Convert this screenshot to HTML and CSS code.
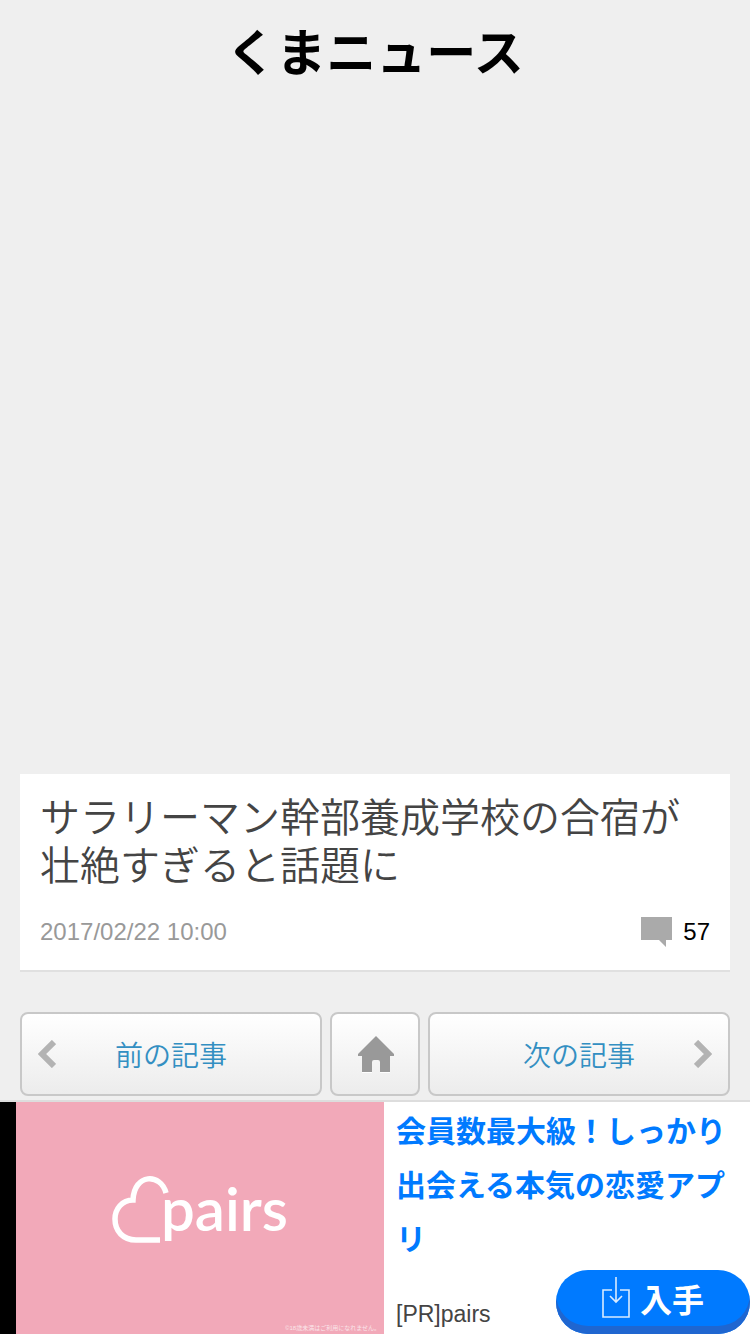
FILE: index.html
```html
<!DOCTYPE html>
<html lang="ja">
<head>
    <meta charset="UTF-8">
    <meta name="viewport" content="width=device-width">
    <title>くまニュース</title>
    <link rel="stylesheet" href="styles.css">
</head>
<body>
    <header class="header">
        <h1>くまニュース</h1>
    </header>

    <main class="main">
        <article class="article">
            <h2>サラリーマン幹部養成学校の合宿が壮絶すぎると話題に</h2>
            <div class="meta">
                <time datetime="2017-02-22T10:00">2017/02/22 10:00</time>
                <span class="comments">
                    <svg width="31" height="30" viewBox="0 0 31 30" aria-hidden="true">
                        <path d="M0 0H31V23H25V30L18 23H0Z" fill="#aaa"/>
                    </svg>
                    57
                </span>
            </div>
        </article>

        <nav class="pager">
            <a class="pager-btn prev" href="#prev">
                <svg width="18" height="28" viewBox="0 0 18 28" aria-hidden="true">
                    <path d="M16 2L4 14L16 26" fill="none" stroke="#b3b3b3" stroke-width="6"/>
                </svg>
                <span>前の記事</span>
            </a>
            <a class="pager-btn home" href="#home" aria-label="ホーム">
                <svg width="38" height="38" viewBox="-2 -1 38 38" aria-hidden="true">
                    <path d="M4 35H14V37H4ZM22 35H32V37H22Z" fill="#fff"/>
                    <path d="M18 0L36 18V20H32V36H22V26Q22 24 20 24H16Q14 24 14 26V36H4V20H0V18Z" fill="#999"/>
                </svg>
            </a>
            <a class="pager-btn next" href="#next">
                <span>次の記事</span>
                <svg width="18" height="28" viewBox="0 0 18 28" aria-hidden="true">
                    <path d="M2 2L14 14L2 26" fill="none" stroke="#b3b3b3" stroke-width="6"/>
                </svg>
            </a>
        </nav>
    </main>

    <aside class="ad">
        <div class="ad-image">
            <svg class="logo" width="200" height="90" viewBox="0 0 200 90" role="img" aria-label="pairs">
                <path d="M66 28C61 8 34 8 33 35C22 35 15 44 15 54C15 66 23 75 36 75H60" fill="none" stroke="#fff" stroke-width="5.5"/>
                <text x="61" y="66">pairs</text>
            </svg>
            <small>©18歳未満はご利用になれません。</small>
        </div>
        <div class="ad-body">
            <a class="ad-title" href="#pairs">会員数最大級！しっかり出会える本気の恋愛アプリ</a>
            <div class="ad-foot">
                <span class="ad-pr">[PR]pairs</span>
                <button class="get-btn" type="button">
                    <svg width="28" height="42" viewBox="0 0 28 42" aria-hidden="true">
                        <path d="M10 13H1V40H27V13H18M14 0V25M8 19L14 25L20 19" fill="none" stroke="#d9ebff" stroke-width="1.6"/>
                    </svg>
                    入手
                </button>
            </div>
        </div>
    </aside>
</body>
</html>
```
FILE: styles.css
```css
* {
    box-sizing: border-box;
}
body {
    display: flex;
    flex-direction: column;
    min-height: 100vh;
    margin: 0;
    background: #efefef;
    color: #000;
    font-family: "Liberation Sans", "Noto Sans CJK JP", sans-serif;
}
.header {
    flex: 1;
    text-align: center;
}
.header h1 {
    margin: 0;
    font-size: 50px;
    line-height: 108px;
}
.main {
    padding: 0 20px 4px;
}
.article {
    padding: 20px;
    background: #fff;
    border-bottom: 2px solid #e0e0e0;
}
.article h2 {
    margin: 0 0 24px;
    color: #444;
    font-size: 40px;
    font-weight: 350;
    line-height: 48px;
}
.meta {
    display: flex;
    justify-content: space-between;
    align-items: center;
    height: 36px;
    font-size: 24px;
}
.meta time {
    color: #999;
}
.comments {
    display: flex;
    align-items: center;
    gap: 11px;
}
.pager {
    display: flex;
    gap: 8px;
    margin-top: 40px;
}
.pager-btn {
    display: flex;
    flex: 1;
    align-items: center;
    height: 84px;
    padding: 0 16px;
    border: 2px solid #c8c8c8;
    border-radius: 8px;
    background: linear-gradient(#fff, #ececec);
    color: #338fc2;
    font-size: 28px;
    font-weight: 350;
    text-align: center;
    text-decoration: none;
}
.pager-btn span {
    flex: 1;
}
.prev span {
    padding-right: 18px;
}
.next span {
    padding-left: 18px;
}
.home {
    flex: 0 0 90px;
    justify-content: center;
}

/* 広告 */
.ad {
    display: grid;
    grid-template-columns: 384px 1fr;
    border-top: 2px solid #ddd;
    background: #fff;
}
.ad-image {
    display: flex;
    flex-direction: column;
    justify-content: space-between;
    padding: 63px 4px 1px 84px;
    border-left: 16px solid #000;
    background: #f2a9b9;
    color: #fff;
}
.logo text {
    fill: #fff;
    font-family: Lato, sans-serif;
    font-size: 60px;
    font-weight: 600;
}
.ad-image small {
    align-self: flex-end;
    font-size: 6px;
    line-height: 10px;
    opacity: 0.7;
}
.ad-body {
    padding: 3px 0 0 12px;
}
.ad-title {
    display: block;
    padding-right: 12px;
    color: #007aff;
    font-size: 30px;
    font-weight: bold;
    line-height: 54px;
    text-decoration: none;
}
.ad-foot {
    display: flex;
    justify-content: space-between;
    align-items: flex-end;
    padding-top: 3px;
}
.ad-pr {
    color: #444;
    font-size: 23px;
    line-height: 40px;
}
.get-btn {
    display: flex;
    justify-content: center;
    align-items: center;
    gap: 10px;
    width: 194px;
    height: 64px;
    padding: 0 0 8px;
    border: none;
    border-radius: 32px;
    background: #007aff;
    box-shadow: inset 0 -8px #1f66d0;
    color: #fff;
    font-family: inherit;
    font-size: 32px;
    font-weight: bold;
}
```
